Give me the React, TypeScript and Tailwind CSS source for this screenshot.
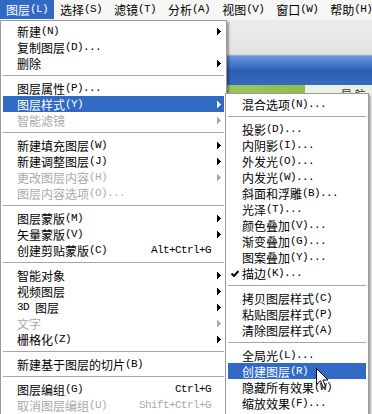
import React from "react";

type Row =
  | "sep"
  | { t: string; arrow?: boolean; dis?: boolean; sc?: string; hi?: boolean; check?: boolean };

function Txt({ s }: { s: string }) {
  const parts = s.split(/([\x20-\x7E]+)/).filter(Boolean);
  return (
    <>
      {parts.map((p, i) =>
        /^[\x20-\x7E]+$/.test(p) ? (
          <span
            key={i}
            className="inline-block h-[15px] leading-[15px] align-top font-['Liberation_Mono',monospace] text-[11px] tracking-[-0.6px] whitespace-pre"
          >
            {p}
          </span>
        ) : (
          <span key={i} className="inline-block h-[15px] leading-[15px] align-top">
            {p}
          </span>
        )
      )}
    </>
  );
}

function Arrow({ color }: { color: string }) {
  return (
    <svg width="4" height="7" viewBox="0 0 4 7" className="mr-[3px] shrink-0" shapeRendering="crispEdges">
      <polygon points="0,0 4,3.5 0,7" fill={color} />
    </svg>
  );
}

function Check() {
  return (
    <svg width="8" height="7" viewBox="0 0 8 7">
      <path d="M0.5 3.5 L3 6 L7.5 1" fill="none" stroke="#000" strokeWidth="2" />
    </svg>
  );
}

const mainItems: Row[] = [
  { t: "新建(N)", arrow: true },
  { t: "复制图层(D)..." },
  { t: "删除", arrow: true },
  "sep",
  { t: "图层属性(P)..." },
  { t: "图层样式(Y)", arrow: true, hi: true },
  { t: "智能滤镜", arrow: true, dis: true },
  "sep",
  { t: "新建填充图层(W)", arrow: true },
  { t: "新建调整图层(J)", arrow: true },
  { t: "更改图层内容(H)", arrow: true, dis: true },
  { t: "图层内容选项(O)...", dis: true },
  "sep",
  { t: "图层蒙版(M)", arrow: true },
  { t: "矢量蒙版(V)", arrow: true },
  { t: "创建剪贴蒙版(C)", sc: "Alt+Ctrl+G" },
  "sep",
  { t: "智能对象", arrow: true },
  { t: "视频图层", arrow: true },
  { t: "3D 图层", arrow: true },
  { t: "文字", arrow: true, dis: true },
  { t: "栅格化(Z)", arrow: true },
  "sep",
  { t: "新建基于图层的切片(B)" },
  "sep",
  { t: "图层编组(G)", sc: "Ctrl+G" },
  { t: "取消图层编组(U)", sc: "Shift+Ctrl+G", dis: true },
];

const subItems: Row[] = [
  { t: "混合选项(N)..." },
  "sep",
  { t: "投影(D)..." },
  { t: "内阴影(I)..." },
  { t: "外发光(O)..." },
  { t: "内发光(W)..." },
  { t: "斜面和浮雕(B)..." },
  { t: "光泽(T)..." },
  { t: "颜色叠加(V)..." },
  { t: "渐变叠加(G)..." },
  { t: "图案叠加(Y)..." },
  { t: "描边(K)...", check: true },
  "sep",
  { t: "拷贝图层样式(C)" },
  { t: "粘贴图层样式(P)" },
  { t: "清除图层样式(A)" },
  "sep",
  { t: "全局光(L)..." },
  { t: "创建图层(R)", hi: true },
  { t: "隐藏所有效果(W)" },
  { t: "缩放效果(F)..." },
];

function MenuRows({ items, sub }: { items: Row[]; sub?: boolean }) {
  return (
    <>
      {items.map((it, i) => {
        if (it === "sep")
          return (
            <div key={i} className="h-[9px] flex items-center">
              <div className="h-px w-full bg-[#a6a6a6]" />
            </div>
          );
        const cls = it.hi
          ? "bg-[#316ac5] text-white"
          : it.dis
          ? "text-[#a9a9a9]"
          : "text-black";
        const arrowColor = it.hi ? "#ffffff" : it.dis ? "#a9a9a9" : "#000000";
        return (
          <div key={i} className={`h-[16px] flex items-center leading-[16px] ${cls}`}>
            <div className="w-[14px] shrink-0 flex justify-center">{sub && it.check ? <Check /> : null}</div>
            <span className="flex-1 whitespace-nowrap h-[15px]">
              <Txt s={it.t} />
            </span>
            {it.sc ? (
              <span className="mr-[13px] whitespace-nowrap h-[15px]">
                <Txt s={it.sc} />
              </span>
            ) : null}
            {it.arrow ? <Arrow color={arrowColor} /> : null}
          </div>
        );
      })}
    </>
  );
}

const bar = ["图层(L)", "选择(S)", "滤镜(T)", "分析(A)", "视图(V)", "窗口(W)", "帮助(H)"];

export default function App() {
  return (
    <div className="relative w-[372px] h-[414px] overflow-hidden bg-[#f2f2f2] text-[12px] font-['Noto_Sans_CJK_SC',sans-serif]">
      {/* menu bar */}
      <div className="h-[20px] flex items-stretch bg-[#f6f6f4]">
        {bar.map((b, i) => (
          <div
            key={i}
            className={`px-[6px] h-[19px] flex items-center whitespace-nowrap ${
              i === 0 ? "bg-[#316ac5] text-white" : "text-black"
            }`}
          >
            <Txt s={b} />
          </div>
        ))}
      </div>
      {/* app background */}
      <div className="h-[35px] bg-linear-to-b from-[#ececec] to-[#e2e2e2] border-b border-[#d6d6d6]" />
      <div className="h-[30px] bg-linear-to-b from-[#6b97dc] via-[#2c5fb6] to-[#3669bf] border-t border-[#8fb0e6]" />
      <div className="h-[10px] flex">
        <div className="w-[305px] bg-linear-to-r from-[#c7dc9c] via-[#a8cd6c] to-[#8ebf47]" />
        <div className="flex-1 bg-[#eaf0e4] text-[#333] text-[11px] leading-[12px] pl-[36px] pt-[3px] whitespace-nowrap">
          导 航
        </div>
      </div>
      <div className="bg-white h-[400px]" />

      {/* main menu */}
      <div className="absolute left-0 top-[20px] w-[227px] h-[400px] bg-white border border-[#9a9a9a] p-[2px] shadow-[2px_2px_2px_rgba(0,0,0,0.35)]">
        <MenuRows items={mainItems} />
      </div>

      {/* submenu */}
      <div className="absolute left-[225px] top-[93px] w-[144px] h-[324px] bg-white border border-[#9a9a9a] p-[2px] shadow-[2px_2px_2px_rgba(0,0,0,0.35)]">
        <MenuRows items={subItems} sub />
      </div>

      {/* cursor */}
      <svg
        className="absolute left-[316px] top-[368px]"
        width="13"
        height="21"
        viewBox="0 0 13 21"
      >
        <path
          d="M0.5 0.5 L0.5 16.5 L4.5 12.8 L7.2 19.5 L9.6 18.5 L7 12 L12 12 Z"
          fill="#ffffff"
          stroke="#000000"
          strokeWidth="1"
          strokeLinejoin="miter"
        />
      </svg>
    </div>
  );
}
